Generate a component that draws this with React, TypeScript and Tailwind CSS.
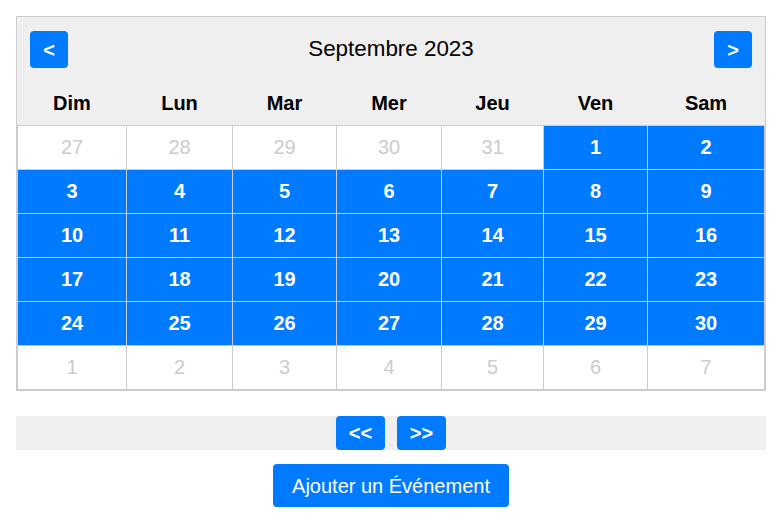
import React from 'react';

const cols = 'grid grid-cols-[108px_105px_103px_104px_101px_103px_116px] gap-px';

const dayNames = ['Dim', 'Lun', 'Mar', 'Mer', 'Jeu', 'Ven', 'Sam'];

interface Day {
    n: number;
    inMonth: boolean;
}

// grille de septembre 2023 (commence un vendredi)
const buildDays = (): Day[] => {
    const days: Day[] = [];
    [27, 28, 29, 30, 31].forEach((n) => days.push({ n, inMonth: false }));
    for (let i = 1; i <= 30; i++) days.push({ n: i, inMonth: true });
    for (let i = 1; i <= 7; i++) days.push({ n: i, inMonth: false });
    return days;
};

const App: React.FC = () => {
    const days = buildDays();

    return (
        <div className="min-h-screen bg-white font-['Liberation_Sans',Arial,sans-serif] text-black">
            <div className="ml-4 mt-4 w-[750px] border border-[#ccc]">
                <div className="bg-[#efefef]">
                    <div className="flex items-center justify-between px-[13px] pt-[14px]">
                        <button className="flex h-[37px] w-[38px] items-center justify-center rounded bg-[#007bff] text-[20px] font-bold text-white">
                            &lt;
                        </button>
                        <h2 className="text-[22.4px] leading-none">Septembre 2023</h2>
                        <button className="flex h-[37px] w-[38px] items-center justify-center rounded bg-[#007bff] text-[20px] font-bold text-white">
                            &gt;
                        </button>
                    </div>
                    <div className={`${cols} h-[57px] items-end px-px pb-[11px]`}>
                        {dayNames.map((d) => (
                            <div key={d} className="text-center text-[20px] font-bold leading-[21px]">
                                {d}
                            </div>
                        ))}
                    </div>
                </div>
                <div className={`${cols} border border-[#ccc] bg-[#ccc]`}>
                    {days.map((d, i) =>
                        d.inMonth ? (
                            <div
                                key={i}
                                className="flex h-[43px] items-center justify-center bg-[#007bff] pb-[2px] text-[20px] font-bold text-white"
                            >
                                {d.n}
                            </div>
                        ) : (
                            <div
                                key={i}
                                className="flex h-[43px] items-center justify-center bg-white pb-[2px] text-[20px] text-[#ccc]"
                            >
                                {d.n}
                            </div>
                        )
                    )}
                </div>
            </div>

            <div className="ml-4 mt-[25px] flex h-[34px] w-[750px] justify-center gap-3 bg-[#efefef]">
                <button className="h-[34px] w-[49px] rounded bg-[#007bff] text-[20px] font-bold text-white">
                    &lt;&lt;
                </button>
                <button className="h-[34px] w-[49px] rounded bg-[#007bff] text-[20px] font-bold text-white">
                    &gt;&gt;
                </button>
            </div>

            <div className="ml-4 mt-[14px] flex w-[750px] justify-center">
                <button className="h-[43px] w-[236px] rounded bg-[#007bff] text-[20px] text-white">
                    Ajouter un Événement
                </button>
            </div>
        </div>
    );
};

export default App;
